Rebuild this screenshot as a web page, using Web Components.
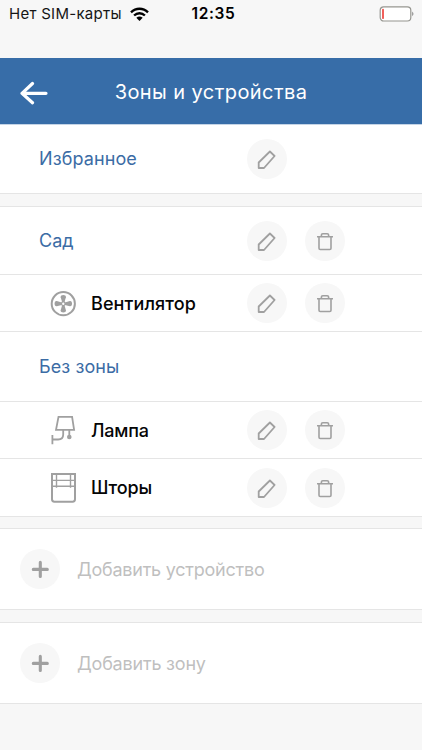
<!DOCTYPE html>
<html lang="ru"><head><meta charset="utf-8"><title>Зоны и устройства</title>
<style>html,body{margin:0;height:100%;background:#f8f8f8;overflow:hidden}</style></head>
<body><zones-app></zones-app>
<script>
const define = (name, markup) => {
  const t = document.createElement('template');
  t.innerHTML = markup;
  customElements.define(name, class extends HTMLElement {
    constructor() { super(); this.attachShadow({mode:'open'}).append(t.content.cloneNode(true)); }
    connectedCallback() {
      const name = this.getAttribute('name');
      const holder = this.shadowRoot.querySelector('[data-icon]');
      if (name && holder) holder.innerHTML = icons[name];
    }
  });
};
const svg = (w, h, body) => `<svg width="${w}" height="${h}" viewBox="0 0 ${w} ${h}" fill="none" stroke="#a0a0a0" stroke-width="1.8">${body}</svg>`;
const blade = a => `<path d="M13.100 14.600L11.700 9.700C11.100 6.700 17.500 6.700 16.900 9.700L15.500 14.600z" transform="rotate(${a} 14.300 16.200)"/>`;
const icons = {
  pencil: svg(40,40,'<path d="M11.700 29v-5.500L22.900 12.500l4.700 4.500L17 29z" stroke-linejoin="round"/>'),
  trash: svg(40,40,'<path d="M12 15.700h16M14 15.700v11.600q0 1.200 1.200 1.200h9.600q1.200 0 1.200-1.200V15.700M16.400 15.200v-1.100q0-1.400 1.400-1.400h4.400q1.400 0 1.400 1.400v1.100" stroke-width="1.600"/>'),
  plus: svg(40,40,'<path d="M20.300 13.400v14M13.300 20.400h14" stroke-width="3.100" stroke-linecap="round"/>'),
  fan: svg(28,32,'<circle cx="14.300" cy="16.700" r="11.600" stroke-width="2"/><g fill="#a0a0a0" stroke="none" transform="translate(0 .5)">'+[0,90,180,270].map(blade).join('')+'</g><circle cx="14.300" cy="16.700" r="1.800" stroke-width="1.200"/>'),
  lamp: svg(28,32,'<path d="M9.500 2.800h13.600l2 13.100H7zM14.200 16v4.500q0 5-5 5H3.400M3.400 21v9.200M20.300 16v5"/><circle cx="20.300" cy="23" r="2.300" fill="#a0a0a0" stroke="none"/>'),
  blinds: svg(28,32,'<path d="M3 2.100h23v25.200q0 2.400-2.400 2.400H5.400q-2.400 0-2.400-2.400z" stroke-width="2"/><path d="M3 8.400h23M3 14.300h23M7.500 2.200v13.600M21.500 2.200v13.600" stroke-width="1.400"/>')
};
define('round-button', `<style>:host{display:block;width:40px;height:40px;border-radius:50%;background:#f7f7f7;flex:none}svg{display:block}</style><div data-icon></div>`);
define('device-icon', `<style>:host{display:block;width:28px;height:32px;flex:none}svg{display:block}</style><div data-icon></div>`);
define('status-bar', `<style>
:host{display:grid;grid-template-columns:1fr auto 1fr;align-items:center;height:28px;padding:0 7px 0 9px;box-sizing:border-box;font:400 15px/28px Inter,sans-serif;color:#151515}
.left{display:flex;align-items:center;gap:8px;white-space:nowrap}.car{letter-spacing:.28px}.time{font-weight:600;font-size:15.500px;letter-spacing:.6px;color:#000;padding-left:3px}.bat{justify-self:end}svg{display:block}
</style><div class="left"><span class="car">Нет SIM-карты</span>
<svg width="19" height="14" viewBox="0 0 19 14" fill="none" stroke="#000" stroke-width="2.400"><path d="M1 5.300C5.900.500 13.100.500 18 5.300M4.100 8.500c3.100-3 7.700-3 10.800 0"/><path d="M6.300 10.800q3.200-2.600 6.400 0L9.500 14z" fill="#000" stroke="none"/></svg></div>
<span class="time">12:35</span>
<svg class="bat" width="36" height="16" viewBox="0 0 36 16"><rect x="1.200" y=".800" width="30.600" height="14.200" rx="3.500" fill="#fff" stroke="#969690" stroke-width="1.200"/><rect x="3" y="2.800" width="2" height="10.200" rx=".8" fill="#f0605b"/><path d="M33.300 5.500q2.200 2.400 0 4.800z" fill="#777"/></svg>`);
define('nav-header', `<style>
:host{display:grid;grid-template-columns:70px 1fr 70px;align-items:center;height:66px;background:#376da8;color:#fff;font:400 20px/28px Inter,sans-serif}
svg{margin-left:20px;margin-top:3px;display:block}.t{padding-top:2px;text-align:center;white-space:nowrap;letter-spacing:var(--ls,0)}
</style><svg width="28" height="24" viewBox="0 0 28 24" fill="none" stroke="#fff" stroke-width="3.200" stroke-linecap="round" stroke-linejoin="round"><path d="M26 12.300H2M12.500 2.500L2 12.300l10.500 9.500"/></svg><span class="t"><slot></slot></span>`);
define('list-card', `<style>:host{display:block;background:#fff;border:solid #e5e5e5;border-width:1px 0;box-sizing:border-box}</style><slot></slot>`);
define('zone-row', `<style>
:host{display:grid;grid-template-columns:190px 40px 40px;column-gap:18px;align-items:center;padding-left:39px;height:var(--h,68px);box-sizing:border-box;color:#3b6ca5;font:400 18px/24px Inter,sans-serif}
:host([line]){border-bottom:1px solid #e5e5e5}.t{white-space:nowrap;letter-spacing:var(--ls,0)}
</style><span class="t"><slot></slot></span><slot name="actions"></slot>`);
define('device-row', `<style>
:host{display:grid;grid-template-columns:28px 142px auto;align-items:center;padding-left:49px;height:var(--h,57px);box-sizing:border-box;color:#050505;font:500 18px/24px Inter,sans-serif}
:host([line]){border-bottom:1px solid #e5e5e5}.t{padding-left:14px;padding-top:1px;white-space:nowrap;letter-spacing:var(--ls,0)}.a{display:flex;gap:18px;margin-left:28px}
</style><slot name="icon"></slot><span class="t"><slot></slot></span><div class="a"><slot name="actions"></slot></div>`);
define('add-row', `<style>
:host{display:flex;align-items:center;gap:17px;height:var(--h,80px);padding-left:20px;color:#bfbfbf;font:400 18px/24px Inter,sans-serif}.t{padding-top:1px;white-space:nowrap;letter-spacing:var(--ls,0)}
</style><round-button name="plus"></round-button><span class="t"><slot></slot></span>`);
define('zones-app', `<style>
:host{display:flex;flex-direction:column;width:422px;height:750px;background:#f7f7f7}
status-bar{margin-bottom:30px}.first{border-top:1px solid #c4d4e6}
.gap{margin-top:12px}.near{margin-top:11px}
</style>
<status-bar></status-bar>
<nav-header style="--ls:.42px">Зоны и устройства</nav-header>
<list-card class="first"><zone-row style="--h:68px;--ls:.1px">Избранное<round-button slot="actions" name="pencil"></round-button></zone-row></list-card>
<list-card class="gap">
<zone-row line style="--h:68px;--ls:0px">Сад<round-button slot="actions" name="pencil"></round-button><round-button slot="actions" name="trash"></round-button></zone-row>
<device-row line style="--h:57px;--ls:.1px"><device-icon slot="icon" name="fan"></device-icon>Вентилятор<round-button slot="actions" name="pencil"></round-button><round-button slot="actions" name="trash"></round-button></device-row>
<zone-row line style="--h:70px;--ls:.1px">Без зоны</zone-row>
<device-row line style="--h:57px;--ls:-.2px"><device-icon slot="icon" name="lamp"></device-icon>Лампа<round-button slot="actions" name="pencil"></round-button><round-button slot="actions" name="trash"></round-button></device-row>
<device-row style="--h:57px;--ls:-.15px"><device-icon slot="icon" name="blinds"></device-icon>Шторы<round-button slot="actions" name="pencil"></round-button><round-button slot="actions" name="trash"></round-button></device-row>
</list-card>
<list-card class="near"><add-row style="--ls:-.24px">Добавить устройство</add-row></list-card>
<list-card class="gap"><add-row style="--ls:-.2px">Добавить зону</add-row></list-card>`);
</script></body></html>
